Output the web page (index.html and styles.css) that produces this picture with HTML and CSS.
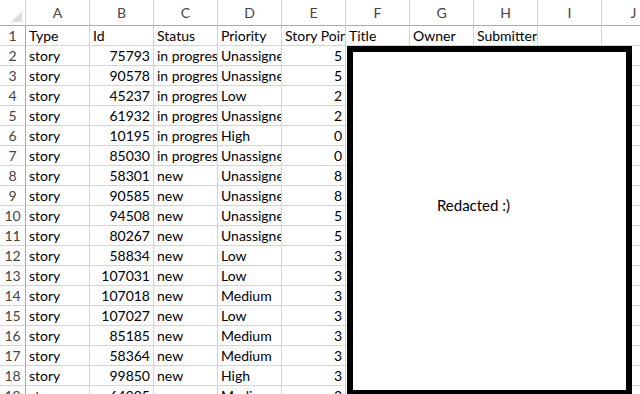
FILE: index.html
```html
<!DOCTYPE html>
<html lang="en">
  <head>
    <meta charset="UTF-8" />
    <title>Stories - Sheet1</title>
    <link rel="stylesheet" href="styles.css">
  </head>
  <body>
    <div class="sheet">
      <div class="row head">
        <div class="corner">
          <svg width="11" height="11" viewBox="0 0 11 11"><polygon points="11,0 11,11 0,11" fill="#dfdfdf" /></svg>
        </div>
        <div class="col">A</div>
        <div class="col">B</div>
        <div class="col">C</div>
        <div class="col">D</div>
        <div class="col">E</div>
        <div class="col">F</div>
        <div class="col">G</div>
        <div class="col">H</div>
        <div class="col">I</div>
        <div class="col">J</div>
      </div>
      <div class="row">
        <div class="rn">1</div>
        <div class="c">Type</div><div class="c">Id</div><div class="c">Status</div><div class="c">Priority</div><div class="c">Story Points</div>
        <div class="c">Title</div><div class="c">Owner</div><div class="c">Submitter</div><div class="c"></div><div class="c"></div>
      </div>
      <div class="row">
        <div class="rn">2</div>
        <div class="c">story</div><div class="c num">75793</div><div class="c">in progress</div><div class="c">Unassigned</div><div class="c num">5</div>
        <div class="c"></div><div class="c"></div><div class="c"></div><div class="c"></div><div class="c"></div>
      </div>
      <div class="row">
        <div class="rn">3</div>
        <div class="c">story</div><div class="c num">90578</div><div class="c">in progress</div><div class="c">Unassigned</div><div class="c num">5</div>
        <div class="c"></div><div class="c"></div><div class="c"></div><div class="c"></div><div class="c"></div>
      </div>
      <div class="row">
        <div class="rn">4</div>
        <div class="c">story</div><div class="c num">45237</div><div class="c">in progress</div><div class="c">Low</div><div class="c num">2</div>
        <div class="c"></div><div class="c"></div><div class="c"></div><div class="c"></div><div class="c"></div>
      </div>
      <div class="row">
        <div class="rn">5</div>
        <div class="c">story</div><div class="c num">61932</div><div class="c">in progress</div><div class="c">Unassigned</div><div class="c num">2</div>
        <div class="c"></div><div class="c"></div><div class="c"></div><div class="c"></div><div class="c"></div>
      </div>
      <div class="row">
        <div class="rn">6</div>
        <div class="c">story</div><div class="c num">10195</div><div class="c">in progress</div><div class="c">High</div><div class="c num">0</div>
        <div class="c"></div><div class="c"></div><div class="c"></div><div class="c"></div><div class="c"></div>
      </div>
      <div class="row">
        <div class="rn">7</div>
        <div class="c">story</div><div class="c num">85030</div><div class="c">in progress</div><div class="c">Unassigned</div><div class="c num">0</div>
        <div class="c"></div><div class="c"></div><div class="c"></div><div class="c"></div><div class="c"></div>
      </div>
      <div class="row">
        <div class="rn">8</div>
        <div class="c">story</div><div class="c num">58301</div><div class="c">new</div><div class="c">Unassigned</div><div class="c num">8</div>
        <div class="c"></div><div class="c"></div><div class="c"></div><div class="c"></div><div class="c"></div>
      </div>
      <div class="row">
        <div class="rn">9</div>
        <div class="c">story</div><div class="c num">90585</div><div class="c">new</div><div class="c">Unassigned</div><div class="c num">8</div>
        <div class="c"></div><div class="c"></div><div class="c"></div><div class="c"></div><div class="c"></div>
      </div>
      <div class="row">
        <div class="rn">10</div>
        <div class="c">story</div><div class="c num">94508</div><div class="c">new</div><div class="c">Unassigned</div><div class="c num">5</div>
        <div class="c"></div><div class="c"></div><div class="c"></div><div class="c"></div><div class="c"></div>
      </div>
      <div class="row">
        <div class="rn">11</div>
        <div class="c">story</div><div class="c num">80267</div><div class="c">new</div><div class="c">Unassigned</div><div class="c num">5</div>
        <div class="c"></div><div class="c"></div><div class="c"></div><div class="c"></div><div class="c"></div>
      </div>
      <div class="row">
        <div class="rn">12</div>
        <div class="c">story</div><div class="c num">58834</div><div class="c">new</div><div class="c">Low</div><div class="c num">3</div>
        <div class="c"></div><div class="c"></div><div class="c"></div><div class="c"></div><div class="c"></div>
      </div>
      <div class="row">
        <div class="rn">13</div>
        <div class="c">story</div><div class="c num">107031</div><div class="c">new</div><div class="c">Low</div><div class="c num">3</div>
        <div class="c"></div><div class="c"></div><div class="c"></div><div class="c"></div><div class="c"></div>
      </div>
      <div class="row">
        <div class="rn">14</div>
        <div class="c">story</div><div class="c num">107018</div><div class="c">new</div><div class="c">Medium</div><div class="c num">3</div>
        <div class="c"></div><div class="c"></div><div class="c"></div><div class="c"></div><div class="c"></div>
      </div>
      <div class="row">
        <div class="rn">15</div>
        <div class="c">story</div><div class="c num">107027</div><div class="c">new</div><div class="c">Low</div><div class="c num">3</div>
        <div class="c"></div><div class="c"></div><div class="c"></div><div class="c"></div><div class="c"></div>
      </div>
      <div class="row">
        <div class="rn">16</div>
        <div class="c">story</div><div class="c num">85185</div><div class="c">new</div><div class="c">Medium</div><div class="c num">3</div>
        <div class="c"></div><div class="c"></div><div class="c"></div><div class="c"></div><div class="c"></div>
      </div>
      <div class="row">
        <div class="rn">17</div>
        <div class="c">story</div><div class="c num">58364</div><div class="c">new</div><div class="c">Medium</div><div class="c num">3</div>
        <div class="c"></div><div class="c"></div><div class="c"></div><div class="c"></div><div class="c"></div>
      </div>
      <div class="row">
        <div class="rn">18</div>
        <div class="c">story</div><div class="c num">99850</div><div class="c">new</div><div class="c">High</div><div class="c num">3</div>
        <div class="c"></div><div class="c"></div><div class="c"></div><div class="c"></div><div class="c"></div>
      </div>
      <div class="row">
        <div class="rn">19</div>
        <div class="c">story</div><div class="c num">64905</div><div class="c">new</div><div class="c">Medium</div><div class="c num">3</div>
        <div class="c"></div><div class="c"></div><div class="c"></div><div class="c"></div><div class="c"></div>
      </div>

      <!-- pasted shape covering the private columns -->
      <div class="redacted">Redacted :)</div>
    </div>
  </body>
</html>
```

FILE: styles.css
```css
body {
  margin: 0;
  background-color: white;
  font-family: Lato, "Open Sans", sans-serif;
  font-size: 14px;
  color: #000;
  overflow: hidden;
}

.sheet {
  position: relative;
  width: 666px;
  height: 394px;
  overflow: hidden;
}

.row {
  display: grid;
  grid-template-columns: 26px repeat(10, 64px);
  height: 20px;
}

.row > div {
  box-sizing: border-box;
  border-right: 1px solid #d4d4d4;
  border-bottom: 1px solid #d4d4d4;
  overflow: hidden;
  white-space: nowrap;
}

/* column letters */
.head {
  height: 26px;
}

.head > div {
  border-bottom-color: #ababab;
}

.col {
  text-align: center;
  line-height: 24px;
  padding-top: 1px;
  color: #444;
  font-size: 14px;
}

.corner {
  display: flex;
  align-items: flex-end;
  justify-content: flex-end;
  padding: 0 3px 3px 0;
}

/* row numbers */
.rn {
  text-align: center;
  line-height: 20px;
  color: #444;
  border-right-color: #ababab !important;
}

.c {
  padding: 0 3px;
  line-height: 20px;
}

.num {
  text-align: right;
}

.redacted {
  position: absolute;
  left: 347px;
  top: 46px;
  width: 285px;
  height: 350px;
  box-sizing: border-box;
  border: 6px solid #000;
  background: white;
  display: flex;
  align-items: center;
  justify-content: center;
  padding: 0 32px 32px 0;
  font-size: 15px;
}
```
